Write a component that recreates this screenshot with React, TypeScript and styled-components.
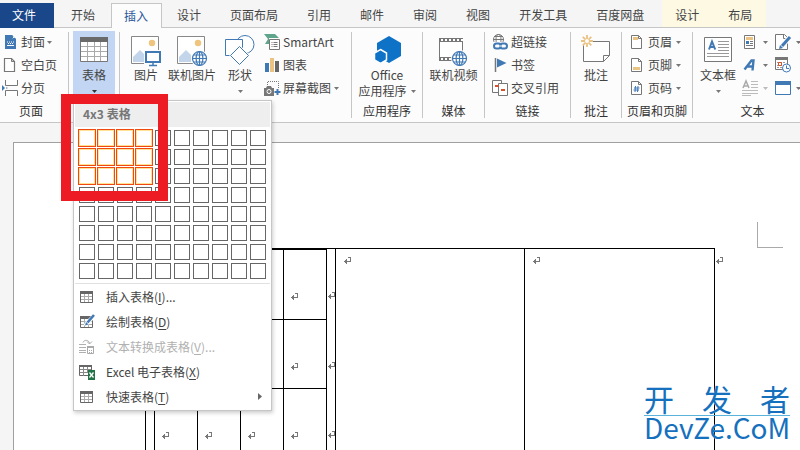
import React from "react";
import styled, { createGlobalStyle, css } from "styled-components";

const GlobalStyle = createGlobalStyle`
  * { box-sizing: border-box; }
  html, body { margin: 0; padding: 0; }
  body {
    background: #f5f5f5;
    color: #444;
    font-family: "Noto Sans CJK SC", sans-serif;
    font-size: 12px;
    line-height: 16px;
    overflow: hidden;
  }
  button {
    margin: 0; padding: 0; border: 0; background: none;
    color: inherit; font: inherit; white-space: nowrap; cursor: pointer;
  }
  svg { display: block; flex: none; overflow: visible; }
`;

/* ---------- layout ---------- */

const Shell = styled.div`
  position: relative;
  display: flex;
  flex-direction: column;
  height: 100vh;
  overflow: hidden;
`;

const TabBar = styled.nav`
  display: flex;
  flex: none;
  height: 28px;
  padding-top: 3px;
  box-shadow: inset 0 -1px #c6c6c6;
`;

const Tab = styled.button<{ $active?: boolean }>`
  flex: none;
  padding: 0 14px 2px 15px;
  ${(p) =>
    p.$active &&
    css`
      margin-left: 2px;
      padding: 0 13px 1px 12px;
      color: #2b579a;
      background: #fcfcfc;
      border: 1px solid #c6c6c6;
      border-bottom: 0;
    `}
`;

const FileTab = styled.button`
  flex: none;
  width: 54px;
  margin-right: 2px;
  padding: 0 6px 2px 0;
  color: #fff;
  background: #19478a;
`;

const ContextTabs = styled.div`
  display: flex;
  margin: -3px 0 1px 4px;
  padding: 3px 0 0;
  background: #fef9e3;
`;

const ContextTab = styled(Tab)`
  padding: 0 14px 1px 13px;
  & + & { padding-left: 15px; }
`;

const Ribbon = styled.div`
  display: flex;
  flex: none;
  height: 95px;
  background: #fcfcfc;
  border-bottom: 1px solid #c6c6c6;
`;

const Group = styled.section<{ $width: number; $trim?: number }>`
  display: flex;
  flex-direction: column;
  flex: none;
  width: ${(p) => p.$width}px;
  padding: 3px ${(p) => p.$trim || 0}px 0 0;
`;

const GroupBody = styled.div<{ $start?: number }>`
  display: flex;
  height: 69px;
  padding-left: ${(p) => p.$start || 0}px;
  ${(p) => p.$start === undefined && "justify-content: center;"}
`;

const GroupLabel = styled.div`
  padding-top: 3px;
  color: #333;
  text-align: center;
  white-space: nowrap;
`;

const Divider = styled.div`
  flex: none;
  width: 1px;
  margin: 4px 0;
  background: #c6c6c6;
`;

const BigButton = styled.button<{ $width?: number; $pressed?: boolean }>`
  display: flex;
  flex-direction: column;
  align-items: center;
  flex: none;
  width: ${(p) => (p.$width ? p.$width + "px" : "auto")};
  height: 69px;
  padding-top: 4px;
  background: ${(p) => (p.$pressed ? "#c2d5f2" : "transparent")};
`;

const BigIcon = styled.span`
  display: flex;
  justify-content: center;
  height: 32px;
`;

const BigLine = styled.span`
  display: flex;
  align-items: center;
  justify-content: center;
  gap: 4px;
  height: 16px;
`;

const Column = styled.div<{ $start?: number }>`
  display: flex;
  flex-direction: column;
  margin-left: ${(p) => p.$start || 0}px;
`;

const SmallButton = styled.button<{ $gap?: number }>`
  display: flex;
  align-items: center;
  gap: ${(p) => p.$gap || 3}px;
  height: 23px;
  padding-bottom: 1px;
`;

/* ---------- table menu ---------- */

const MenuAnchor = styled.div`
  position: relative;
  z-index: 2;
`;

const Menu = styled.div`
  position: absolute;
  top: 69px;
  left: 0;
  width: 199px;
  padding: 1px;
  background: #fff;
  border: 1px solid #c6c6c6;
  box-shadow: 1px 2px 4px rgba(0, 0, 0, 0.2);
`;

const MenuTitle = styled.div`
  height: 25px;
  padding: 4px 8px;
  color: #777;
  background: #eee;
  font-weight: 700;
`;

const SizeGrid = styled.div`
  display: grid;
  grid-template-columns: repeat(10, 16px);
  grid-auto-rows: 16px;
  gap: 3px;
  padding: 3px 4px 4px;
  border-bottom: 1px solid #e1e1e1;
`;

const SizeCell = styled.button<{ $on: boolean }>`
  background: #fff;
  border: 1px solid ${(p) => (p.$on ? "#ffe294" : "#666")};
  box-shadow: ${(p) => (p.$on ? "0 0 0 1px #ef4810" : "none")};
`;

const MenuItem = styled.button`
  display: flex;
  align-items: center;
  gap: 11px;
  width: 100%;
  height: 25px;
  padding: 0 8px 0 4px;
  text-align: left;
  &:disabled { color: #b1b1b1; }
`;

const MenuText = styled.span`
  flex: 1;
  u { text-underline-offset: 2px; }
`;

const Highlight = styled.div`
  position: absolute;
  top: 63px;
  left: -12px;
  width: 107px;
  height: 107px;
  border: 10px solid #ed1c24;
  pointer-events: none;
`;

/* ---------- document ---------- */

const Workspace = styled.main`
  display: flex;
  flex: 1;
  min-height: 0;
  padding: 19px 0 0 13px;
`;

const Paper = styled.article`
  flex: 1;
  background: #fff;
  border: solid #a0a0a0;
  border-width: 1px 0 0 1px;
`;

const PaperMargin = styled.div`
  display: flex;
  justify-content: flex-end;
  padding: 79px 17px 0 0;
`;

const MarginCorner = styled.div`
  width: 26px;
  height: 26px;
  border: solid #aaa;
  border-width: 0 0 1px 1px;
`;

const DocTable = styled.table`
  table-layout: fixed;
  width: 580px;
  height: 340px;
  margin: 0 0 0 131px;
  border-spacing: 0;
`;

const DocCell = styled.td<{ $width: number; $nest?: boolean }>`
  width: ${(p) => p.$width}px;
  padding: ${(p) => (p.$nest ? "0 0 0 8px" : "8px 0 0 8px")};
  vertical-align: top;
  border: solid #000;
  border-width: 1px 0 0 1px;
`;

const DocEnd = styled.td`
  width: 11px;
  padding: 9px 0 0 1px;
  vertical-align: top;
  border-left: 1px solid #000;
`;

const InnerTable = styled.table`
  table-layout: fixed;
  width: 181px;
  border-spacing: 0;
`;

const InnerRow = styled.tr`
  height: 69px;
  &:first-child { height: 70px; }
`;

const InnerCell = styled.td`
  width: 43px;
  padding: 43px 0 0 7px;
  vertical-align: top;
  border: solid #000;
  border-width: 1px 0 0 1px;
`;

const InnerEnd = styled.td`
  width: 9px;
  padding: 43px 0 0 1px;
  vertical-align: top;
  border-left: 1px solid #000;
`;

const Watermark = styled.aside`
  position: absolute;
  right: 10px;
  bottom: 12px;
  width: 146px;
  color: #1570bd;
  text-shadow: 0 0 1px #fff;
`;

const WatermarkTop = styled.div`
  height: 31px;
  border-bottom: 1px solid #5bb3dc;
  font-size: 30px;
  line-height: 26px;
  text-align-last: justify;
`;

const WatermarkBottom = styled.div`
  font-size: 28px;
  line-height: 22px;
  white-space: nowrap;
`;

/* ---------- icons ---------- */

const G = "#777";
const B = "#4179b5";
const Y = "#eac282";

const Arrow = ({ color = "#777" }: { color?: string }) => (
  <svg width="5" height="3" viewBox="0 0 5 3"><path d="M0 0h5L2.500 3z" fill={color} /></svg>
);

const Return = () => (
  <svg width="8" height="8" viewBox="0 0 8 8" fill="none" stroke="#777" shapeRendering="crispEdges">
    <path d="M4 .5h2.500V4.500H0" /><path d="M2.500 2v5M1.500 3v3" />
  </svg>
);

const Box = ({ children, w = 16, h = 16 }: { children: React.ReactNode; w?: number; h?: number }) => (
  <svg width={w} height={h} viewBox={`0 0 ${w} ${h}`} fill="none" aria-hidden="true">{children}</svg>
);

const Globe = ({ x, y, r }: { x: number; y: number; r: number }) => (
  <g stroke={B} strokeWidth="1.200">
    <circle cx={x} cy={y} r={r} fill="#fff" />
    <ellipse cx={x} cy={y} rx={r * 0.48} ry={r} />
    <path d={`M${x} ${y - r}V${y + r}M${x - r} ${y}H${x + r}M${x - r * 0.86} ${y - r / 2}H${x + r * 0.86}M${x - r * 0.86} ${y + r / 2}H${x + r * 0.86}`} />
  </g>
);

const CoverIcon = () => (
  <Box>
    <path d="M2 1h7l4 4v10H2z" fill={B} /><path d="M9 1v4h4z" fill="#fcfcfc" /><path d="M9.500 1.500v3h3" stroke={B} />
    <path d="M4 8h1m1 0h1m1 0h1m1 0h1M5 9.500h1m1 0h1m1 0h1M4 11.500h7" stroke="#fff" />
  </Box>
);
const BlankIcon = () => (
  <Box><path d="M1.500 1.500h7l3 3v10h-10z" fill="#fff" stroke={G} strokeWidth="1.200" /><path d="M8.500 1.500v3h3" stroke={G} /></Box>
);
const BreakIcon = () => (
  <Box>
    <path d="M2.500 0v5.500h12V0M2.500 16v-5.500h12V16" fill="#fff" stroke={G} />
    <path d="M3 8h1.500" stroke={G} /><path d="M-1 5v6l3-3z" fill={B} />
  </Box>
);
const TableIcon = () => (
  <Box w={28} h={32}>
    <path d="M.5 2.500h27v24H.5z" fill="#fff" stroke={G} /><path d="M0 2h28v5H0z" fill="#6a6a6a" />
    <path d="M1 11.500h26M1 16.500h26M1 21.500h26M7.500 7v19M14.500 7v19M20.500 7v19" stroke="#aaa" />
  </Box>
);
const PictureBase = () => (
  <>
    <path d="M.5 1.500h27v27H.5z" fill="#fff" stroke="#888" /><circle cx="21" cy="8" r="3.200" fill="#efc47d" />
    <path d="M2 27V22l7-7 5 5v7z" fill="#c3d5ea" />
  </>
);
const PictureIcon = () => (
  <Box w={30} h={32}>
    <PictureBase /><path d="M13 15h17v16H13z" fill="#fcfcfc" />
    <path d="M15 17h14v10H15z" fill="#fff" stroke={B} strokeWidth="2" />
    <path d="M22 27v3M18 30.500h8" stroke={B} strokeWidth="1.500" />
  </Box>
);
const OnlinePictureIcon = () => (
  <Box w={30} h={32}><PictureBase /><circle cx="22.500" cy="23.500" r="8.500" fill="#fcfcfc" /><Globe x={22.5} y={23.5} r={7} /></Box>
);
const ShapesIcon = () => (
  <Box w={30} h={32}>
    <circle cx="20" cy="9.500" r="9" fill="#fff" stroke={B} />
    <path d="M.5 4.500h17v16H.5z" fill="#fff" stroke={B} />
    <path d="M14.500 9.500l10.500 11-10.500 10L4 20z" fill="#fcfcfc" />
    <path d="M14.500 11.500l9 9-9 9-9-9z" fill="#fff" stroke={B} />
  </Box>
);
const SmartArtIcon = () => (
  <Box>
    <path d="M0 0h11l4 4H5v6H1l3-5z" fill="#5fa58b" /><path d="M5.500 5.500h10v10h-10z" fill="#fff" stroke={G} />
    <path d="M7.500 8.500h1m1 0h4M7.500 10.500h1m1 0h4M7.500 12.500h1m1 0h4" stroke={G} />
  </Box>
);
const ChartIcon = () => (
  <Box><path d="M1 6h4v9H1z" fill={B} /><path d="M6 1h4v14H6z" fill={Y} /><path d="M11 4h4v11h-4z" fill="#666" /></Box>
);
const ScreenshotIcon = () => (
  <Box>
    <path d="M3.500 5V1.500h11V9" stroke={G} strokeDasharray="1 1" />
    <path d="M0 8h2l1-2h4l1 2h2v8H0z" fill={G} /><circle cx="5" cy="11.500" r="2" stroke="#fff" />
    <path d="M13.500 9v6M10.500 12h6" stroke={B} strokeWidth="2" />
  </Box>
);
const OfficeIcon = () => (
  <Box w={30} h={32}>
    <path d="M17 1l12 7v13l-12 7-12-7V8z" fill="#0e72c6" />
    <path d="M8.500 14.500l6 3.500v7l-6 3.500L2.500 25v-7z" fill="#0e72c6" stroke="#fcfcfc" strokeWidth="1.500" />
  </Box>
);
const VideoIcon = () => (
  <Box w={30} h={32}>
    <path d="M1.500 3.500h23v22h-23z" fill="#fff" stroke={G} /><path d="M1 3h24v4H1zM1 22h24v4H1z" fill={G} />
    <path d="M3 5h22M3 24h22" stroke="#fff" strokeWidth="2" strokeDasharray="2 2" />
    <circle cx="21.500" cy="23.500" r="8.500" fill="#fcfcfc" /><Globe x={21.5} y={23.5} r={7} />
  </Box>
);
const LinkIcon = () => (
  <Box>
    <g stroke={G}><circle cx="6.500" cy="5.500" r="5" fill="#fff" /><ellipse cx="6.500" cy="5.500" rx="2.500" ry="5" /><path d="M1 5.500h11M2 2.500h9" /></g>
    <path d="M0 8h16v8H0z" fill="#fcfcfc" />
    <g stroke={B} strokeWidth="2"><rect x="2" y="9.500" width="7" height="5" rx="2.500" /><rect x="8" y="9.500" width="7" height="5" rx="2.500" /></g>
    <path d="M6 12h5" stroke="#fff" />
  </Box>
);
const BookmarkIcon = () => (
  <Box><path d="M3.500 1v14" stroke={G} strokeWidth="1.500" /><path d="M5 1.500l9.500 4.500L5 10.500z" fill={B} /></Box>
);
const CrossRefIcon = () => (
  <Box>
    <path d="M.5.5h9v12h-9z" fill="#fff" stroke={G} /><path d="M6.500 3.500h9v12h-9z" fill="#fff" stroke={G} />
    <path d="M3 5h4v2H3zM9 9h4v2H9z" fill="#d6532a" />
  </Box>
);
const CommentIcon = () => (
  <Box w={32} h={32}>
    <path d="M3.500 10v16.500h20l6-6V6.500H13" fill="#fff" stroke={G} /><path d="M23.500 26.500v-6h6" stroke={G} />
    <path d="M7 0v12M1 6h12M2.800 1.800l8.500 8.500M11.300 1.800l-8.500 8.500" stroke={Y} strokeWidth="1.800" />
    <circle cx="7" cy="6" r="2" fill="#fcfcfc" />
  </Box>
);
const PageShape = ({ children }: { children: React.ReactNode }) => (
  <Box><path d="M3.500 1.500h7l3 3v10h-10z" fill="#fff" stroke={G} /><path d="M10.500 1.500v3h3" stroke={G} />{children}</Box>
);
const HeaderIcon = () => <PageShape><path d="M5 3h5v3H5z" fill={Y} /></PageShape>;
const FooterIcon = () => <PageShape><path d="M5 10h7v3H5z" fill={Y} /></PageShape>;
const NumberIcon = () => (
  <PageShape><path d="M7.500 6l-.5 6M10 6l-.5 6M6 8h5.500M5.500 10h5.500" stroke={B} /></PageShape>
);
const TextBoxIcon = () => (
  <Box w={28} h={32}>
    <path d="M.5 2.500h27v24H.5z" fill="#fff" stroke={G} />
    <path d="M5 14.500L8 6.500l3.200 8M6 12h4.500" stroke={B} strokeWidth="2" />
    <path d="M14 6.500h11M14 9.500h11M14 12.500h11M14 15.500h11M3 18.500h22M3 21.500h22" stroke="#999" />
  </Box>
);
const QuickPartsIcon = () => (
  <Box>
    <path d="M2.500 1.500h10v13h-10z" fill="#fff" stroke={G} /><path d="M4 3h7v3H4z" fill={Y} />
    <path d="M4 7h3v3H4z" fill={B} /><path d="M8 7.500h3M8 9.500h3M4 11.500h7" stroke={G} />
  </Box>
);
const WordArtIcon = () => (
  <Box><path d="M2.500 12.500l7-9h2l-1 10M5 9.500h7" stroke={B} strokeWidth="2.400" /></Box>
);
const DropCapIcon = () => (
  <Box>
    <path d="M1 8l3-7 3 7M2 6h4" stroke="#aaa" strokeWidth="1.500" />
    <path d="M9 1.500h7M9 4.500h7M9 7.500h7M0 10.500h16M0 13.500h16M0 15.500h9" stroke="#bbb" />
  </Box>
);
const SignIcon = () => (
  <Box>
    <path d="M.5.500h9l3 3v12H.5z" fill="#fff" stroke={G} /><path d="M8.500.500v4h4" stroke={G} />
    <path d="M15 3L7 12" stroke="#fcfcfc" strokeWidth="5" /><path d="M15 3L7 12" stroke={B} strokeWidth="3" /><path d="M4 15l1-4 3 3z" fill={B} />
  </Box>
);
const DateIcon = () => (
  <Box>
    <path d="M.5.500h12v12H.5z" fill="#fff" stroke={G} /><path d="M0 0h13v3H0z" fill={G} />
    <path d="M2 5.500h9M2 8.500h9M2 10.500h6" stroke="#999" strokeDasharray="2 1" /><path d="M3.500 5.500h3v3h-3z" fill="#fff" stroke="#d6532a" />
    <circle cx="11.500" cy="11" r="4" fill="#fff" stroke={B} /><path d="M11.500 8.500v3h2.500" stroke={B} />
  </Box>
);
const ObjectIcon = () => (
  <Box><path d="M.5 2.500h15v12H.5z" fill="#fff" stroke={B} /><path d="M0 1h16v4H0z" fill={B} /></Box>
);
const GridGlyph = () => (
  <>
    <path d="M1.500 2.500h12v11h-12z" fill="#fff" stroke="#666" /><path d="M1 2h13v3H1z" fill="#666" />
    <path d="M2 7.500h11M2 10.500h11M5.500 5v8M9.500 5v8" stroke="#aaa" />
  </>
);
const MenuTableIcon = () => <Box><GridGlyph /></Box>;
const DrawTableIcon = () => (
  <Box>
    <GridGlyph /><path d="M15 2L8 9l-1.500 3" stroke="#fff" strokeWidth="4" />
    <path d="M15 1L8.500 8.500" stroke={B} strokeWidth="2.600" /><path d="M6 11.500l1-3.500 2.500 2.500z" fill={B} />
  </Box>
);
const ConvertIcon = () => (
  <Box>
    <path d="M0 5.500h7M0 8.500h7M0 11.500h7M0 13.500h7" stroke="#b0b0b0" />
    <path d="M4 3.500C5 .5 10 .5 10.500 4.500M8 2.500l2.500 2.500L13 2.500" stroke="#aaa" />
    <path d="M8.500 7.500h6v7h-6z" fill="#fff" stroke="#aaa" /><path d="M8 7h7v2H8z" fill="#aaa" /><path d="M10 11.500h3M10 13.500h3" stroke="#aaa" strokeDasharray="1 1" />
  </Box>
);
const ExcelIcon = () => (
  <Box>
    <path d="M.5 1.500h12v10H.5z" fill="#fff" stroke="#666" /><path d="M0 1h13v2H0z" fill="#666" />
    <path d="M1 5.500h11M1 8.500h8M4.500 3v9M8.500 3v5" stroke="#888" />
    <path d="M9 6h7v10H9z" fill="#217346" /><path d="M10.500 8.500l4 5M14.500 8.500l-4 5" stroke="#fff" strokeWidth="1.300" />
  </Box>
);
const SubmenuArrow = () => <svg width="4" height="7" viewBox="0 0 4 7"><path d="M0 0v7l4-3.500z" fill="#666" /></svg>;

/* ---------- parts ---------- */

type SmallProps = { icon: React.ReactNode; label: string; arrow?: boolean; gap?: number };
const Small = ({ icon, label, arrow, gap }: SmallProps) => (
  <SmallButton $gap={gap}>{icon}<span>{label}</span>{arrow && <Arrow />}</SmallButton>
);

type BigProps = { icon: React.ReactNode; label: string; width?: number; arrow?: boolean; pressed?: boolean };
const Big = ({ icon, label, width, arrow, pressed }: BigProps) => (
  <BigButton $width={width} $pressed={pressed} aria-expanded={pressed}>
    <BigIcon>{icon}</BigIcon>
    <BigLine>{label}</BigLine>
    {arrow && <BigLine><Arrow color={pressed ? "#333" : undefined} /></BigLine>}
  </BigButton>
);

const IconOnly = ({ icon, label, faded, plain }: { icon: React.ReactNode; label: string; faded?: boolean; plain?: boolean }) => (
  <SmallButton $gap={5} aria-label={label}>{icon}{!plain && <Arrow color={faded ? "#bbb" : undefined} />}</SmallButton>
);

const menuItems = [
  { icon: <MenuTableIcon />, text: "插入表格", key: "I", tail: "..." },
  { icon: <DrawTableIcon />, text: "绘制表格", key: "D" },
  { icon: <ConvertIcon />, text: "文本转换成表格", key: "V", tail: "...", disabled: true },
  { icon: <ExcelIcon />, text: "Excel 电子表格", key: "X" },
  { icon: <MenuTableIcon />, text: "快速表格", key: "T", submenu: true },
];

const TableMenu = ({ cols, rows }: { cols: number; rows: number }) => (
  <Menu>
    <MenuTitle>{`${cols}x${rows} 表格`}</MenuTitle>
    <SizeGrid>
      {Array.from({ length: 80 }, (_, i) => {
        const c = i % 10;
        const r = Math.floor(i / 10);
        return <SizeCell key={i} $on={c < cols && r < rows} aria-label={`${c + 1}x${r + 1}`} />;
      })}
    </SizeGrid>
    {menuItems.map((m) => (
      <MenuItem key={m.key} disabled={m.disabled}>
        {m.icon}
        <MenuText>{m.text}(<u>{m.key}</u>){m.tail}</MenuText>
        {m.submenu && <SubmenuArrow />}
      </MenuItem>
    ))}
  </Menu>
);

const tabs = ["开始", "插入", "设计", "页面布局", "引用", "邮件", "审阅", "视图", "开发工具", "百度网盘"];

export default function App() {
  return (
    <>
      <GlobalStyle />
      <Shell>
        <TabBar>
          <FileTab>文件</FileTab>
          {tabs.map((t) => <Tab key={t} $active={t === "插入"}>{t}</Tab>)}
          <ContextTabs><ContextTab>设计</ContextTab><ContextTab>布局</ContextTab></ContextTabs>
        </TabBar>

        <Ribbon>
          <Group $width={68} $trim={6}>
            <GroupBody $start={3}>
              <Column>
                <Small icon={<CoverIcon />} label="封面" arrow gap={2} />
                <Small icon={<BlankIcon />} label="空白页" gap={2} />
                <Small icon={<BreakIcon />} label="分页" gap={2} />
              </Column>
            </GroupBody>
            <GroupLabel>页面</GroupLabel>
          </Group>
          <Divider />
          <Group $width={50}>
            <GroupBody $start={4}>
              <MenuAnchor>
                <Big icon={<TableIcon />} label="表格" width={42} arrow pressed />
                <TableMenu cols={4} rows={3} />
                <Highlight />
              </MenuAnchor>
            </GroupBody>
          </Group>
          <Divider />
          <Group $width={231}>
            <GroupBody $start={8}>
              <Big icon={<PictureIcon />} label="图片" width={36} />
              <Big icon={<OnlinePictureIcon />} label="联机图片" width={56} />
              <Big icon={<ShapesIcon />} label="形状" width={40} arrow />
              <Column $start={4}>
                <Small icon={<SmartArtIcon />} label="SmartArt" />
                <Small icon={<ChartIcon />} label="图表" />
                <Small icon={<ScreenshotIcon />} label="屏幕截图" arrow />
              </Column>
            </GroupBody>
          </Group>
          <Divider />
          <Group $width={70}>
            <GroupBody>
              <BigButton>
                <BigIcon><OfficeIcon /></BigIcon>
                <BigLine>Office</BigLine>
                <BigLine>应用程序<Arrow /></BigLine>
              </BigButton>
            </GroupBody>
            <GroupLabel>应用程序</GroupLabel>
          </Group>
          <Divider />
          <Group $width={61}>
            <GroupBody><Big icon={<VideoIcon />} label="联机视频" /></GroupBody>
            <GroupLabel>媒体</GroupLabel>
          </Group>
          <Divider />
          <Group $width={85}>
            <GroupBody $start={7}>
              <Column>
                <Small icon={<LinkIcon />} label="超链接" />
                <Small icon={<BookmarkIcon />} label="书签" />
                <Small icon={<CrossRefIcon />} label="交叉引用" />
              </Column>
            </GroupBody>
            <GroupLabel>链接</GroupLabel>
          </Group>
          <Divider />
          <Group $width={50}>
            <GroupBody><Big icon={<CommentIcon />} label="批注" /></GroupBody>
            <GroupLabel>批注</GroupLabel>
          </Group>
          <Divider />
          <Group $width={70}>
            <GroupBody $start={6}>
              <Column>
                <Small icon={<HeaderIcon />} label="页眉" arrow gap={4} />
                <Small icon={<FooterIcon />} label="页脚" arrow gap={4} />
                <Small icon={<NumberIcon />} label="页码" arrow gap={4} />
              </Column>
            </GroupBody>
            <GroupLabel>页眉和页脚</GroupLabel>
          </Group>
          <Divider />
          <Group $width={119}>
            <GroupBody $start={4}>
              <Big icon={<TextBoxIcon />} label="文本框" width={42} arrow />
              <Column $start={3}>
                <IconOnly icon={<QuickPartsIcon />} label="文档部件" />
                <IconOnly icon={<WordArtIcon />} label="艺术字" />
                <IconOnly icon={<DropCapIcon />} label="首字下沉" faded />
              </Column>
              <Column $start={7}>
                <IconOnly icon={<SignIcon />} label="签名行" />
                <IconOnly icon={<DateIcon />} label="日期和时间" plain />
                <IconOnly icon={<ObjectIcon />} label="对象" />
              </Column>
            </GroupBody>
            <GroupLabel>文本</GroupLabel>
          </Group>
        </Ribbon>

        <Workspace>
          <Paper>
            <PaperMargin><MarginCorner /></PaperMargin>
            <DocTable>
              <tbody>
                <tr>
                  <DocCell $width={190} $nest>
                    <InnerTable>
                      <tbody>
                        {[0, 1, 2].map((r) => (
                          <InnerRow key={r}>
                            {[0, 1, 2, 3].map((c) => <InnerCell key={c}><Return /></InnerCell>)}
                            <InnerEnd><Return /></InnerEnd>
                          </InnerRow>
                        ))}
                      </tbody>
                    </InnerTable>
                  </DocCell>
                  <DocCell $width={189}><Return /></DocCell>
                  <DocCell $width={190}><Return /></DocCell>
                  <DocEnd><Return /></DocEnd>
                </tr>
              </tbody>
            </DocTable>
          </Paper>
        </Workspace>

        <Watermark>
          <WatermarkTop>开 发 者</WatermarkTop>
          <WatermarkBottom>DevZe.CoM</WatermarkBottom>
        </Watermark>
      </Shell>
    </>
  );
}
